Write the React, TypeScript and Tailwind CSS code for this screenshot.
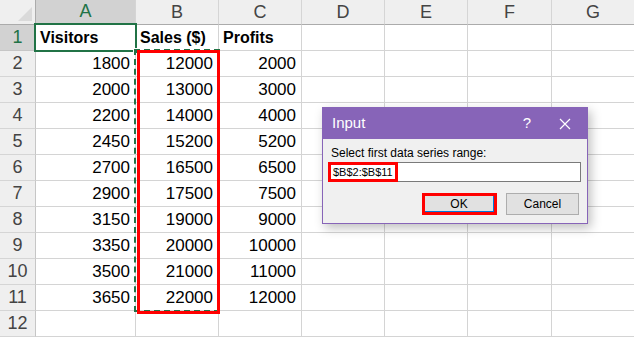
import React from "react";

const COLS = ["A", "B", "C", "D", "E", "F", "G"];

const DATA: string[][] = [
  ["Visitors", "Sales ($)", "Profits"],
  ["1800", "12000", "2000"],
  ["2000", "13000", "3000"],
  ["2200", "14000", "4000"],
  ["2450", "15200", "5200"],
  ["2700", "16500", "6500"],
  ["2900", "17500", "7500"],
  ["3150", "19000", "9000"],
  ["3350", "20000", "10000"],
  ["3500", "21000", "11000"],
  ["3650", "22000", "12000"],
  ["", "", ""],
];

function InputDialog() {
  return (
    <div className="absolute left-[322px] top-[107px] w-[266px] h-[117px] border border-[#8764b8] bg-[#f0f0f0] shadow-[3px_4px_10px_rgba(0,0,0,0.25)] flex flex-col">
      {/* title bar */}
      <div className="h-[31px] bg-[#8764b8] flex items-center text-white text-[15px]">
        <span className="pl-[9px] flex-1">Input</span>
        <span className="w-[20px] text-center">?</span>
        <span className="w-[44px] ml-[6px] flex justify-center">
          <svg width="12" height="12" viewBox="0 0 12 12" fill="none" stroke="white" strokeWidth="1.2">
            <path d="M1 1L11 11M11 1L1 11" />
          </svg>
        </span>
      </div>

      {/* body */}
      <div className="flex flex-col px-[5px] pr-[6px]">
        <div className="pl-[3px] pt-[6px] text-[12px] text-black leading-[16px]">Select first data series range:</div>
        <div className="mt-[1px] h-[20px] bg-white border border-[#7a7a7a] flex items-center relative">
          <div className="h-[20px] w-[70px] border-[3px] border-[#ff0000] absolute left-[-1px] top-[-1px]" />
          <span className="pl-[4px] text-[11px] text-black">$B$2:$B$11</span>
          <span className="w-px h-[14px] bg-black ml-[2px]" />
        </div>
        <div className="flex justify-end gap-[9px] mt-[11px] pr-[2px]">
          <div className="w-[75px] h-[22px] border-[3px] border-[#ff0000] bg-[#e1e1e1] flex items-center justify-center text-[12px] text-black">
            <div className="w-full h-full border-r border-b border-[#0078d7] flex items-center justify-center">OK</div>
          </div>
          <div className="w-[73px] h-[22px] border border-[#adadad] bg-[#e1e1e1] flex items-center justify-center text-[12px] text-black">
            Cancel
          </div>
        </div>
      </div>
    </div>
  );
}

export default function App() {
  return (
    <div className="relative w-[634px] h-[338px] overflow-hidden bg-white font-['Liberation_Sans',Arial,sans-serif] text-black">
      <div className="grid grid-cols-[36px_100px_83px_83px_83px_83px_84px_83px] grid-rows-[25px_repeat(12,26px)]">
        {/* corner */}
        <div className="bg-[#efefef] border-r border-b border-[#ababab] relative">
          <svg className="absolute right-[3px] bottom-[3px]" width="14" height="14" viewBox="0 0 14 14">
            <polygon points="14,0 14,14 0,14" fill="#dadada" />
          </svg>
        </div>
        {COLS.map((c) =>
          c === "A" ? (
            <div
              key={c}
              className="bg-[#d2d2d2] border-r border-[#d5d5d5] border-b-2 border-b-[#217346] flex items-center justify-center text-[18px] text-[#217346]"
            >
              {c}
            </div>
          ) : (
            <div
              key={c}
              className="bg-[#efefef] border-r border-[#d5d5d5] border-b border-b-[#ababab] flex items-center justify-center text-[18px] text-[#444]"
            >
              {c}
            </div>
          )
        )}

        {DATA.map((row, r) => (
          <React.Fragment key={r}>
            <div
              className={
                r === 0
                  ? "bg-[#d2d2d2] border-r border-b border-[#c6c6c6] flex items-center justify-center text-[18px] text-[#217346]"
                  : "bg-[#efefef] border-r border-b border-[#c6c6c6] border-b-[#d5d5d5] flex items-center justify-center text-[18px] text-[#444]"
              }
            >
              {r + 1}
            </div>
            {COLS.map((c, ci) => {
              const v = ci < 3 ? row[ci] : "";
              const header = r === 0;
              return (
                <div
                  key={c}
                  className={
                    header
                      ? "border-r border-b border-[#d4d4d4] flex items-center pl-[4px] text-[16px] font-bold whitespace-nowrap"
                      : "border-r border-b border-[#d4d4d4] flex items-center justify-end pr-[5px] text-[17px] whitespace-nowrap"
                  }
                >
                  {v}
                </div>
              );
            })}
          </React.Fragment>
        ))}
      </div>

      {/* active cell A1 */}
      <div className="absolute left-[34px] top-[23px] w-[103px] h-[29px] border-2 border-[#217346]" />
      <div className="absolute left-[133px] top-[48px] w-[6px] h-[6px] bg-[#217346] border border-white" />

      {/* copy marquee around B2:B11 */}
      <div className="absolute left-[134px] top-[49px] w-[86px] h-[263px] border-2 border-dashed border-[#217346]" />

      {/* red highlight */}
      <div className="absolute left-[137px] top-[50px] w-[83px] h-[264px] border-[3px] border-[#ff0000]" />

      <InputDialog />
    </div>
  );
}
